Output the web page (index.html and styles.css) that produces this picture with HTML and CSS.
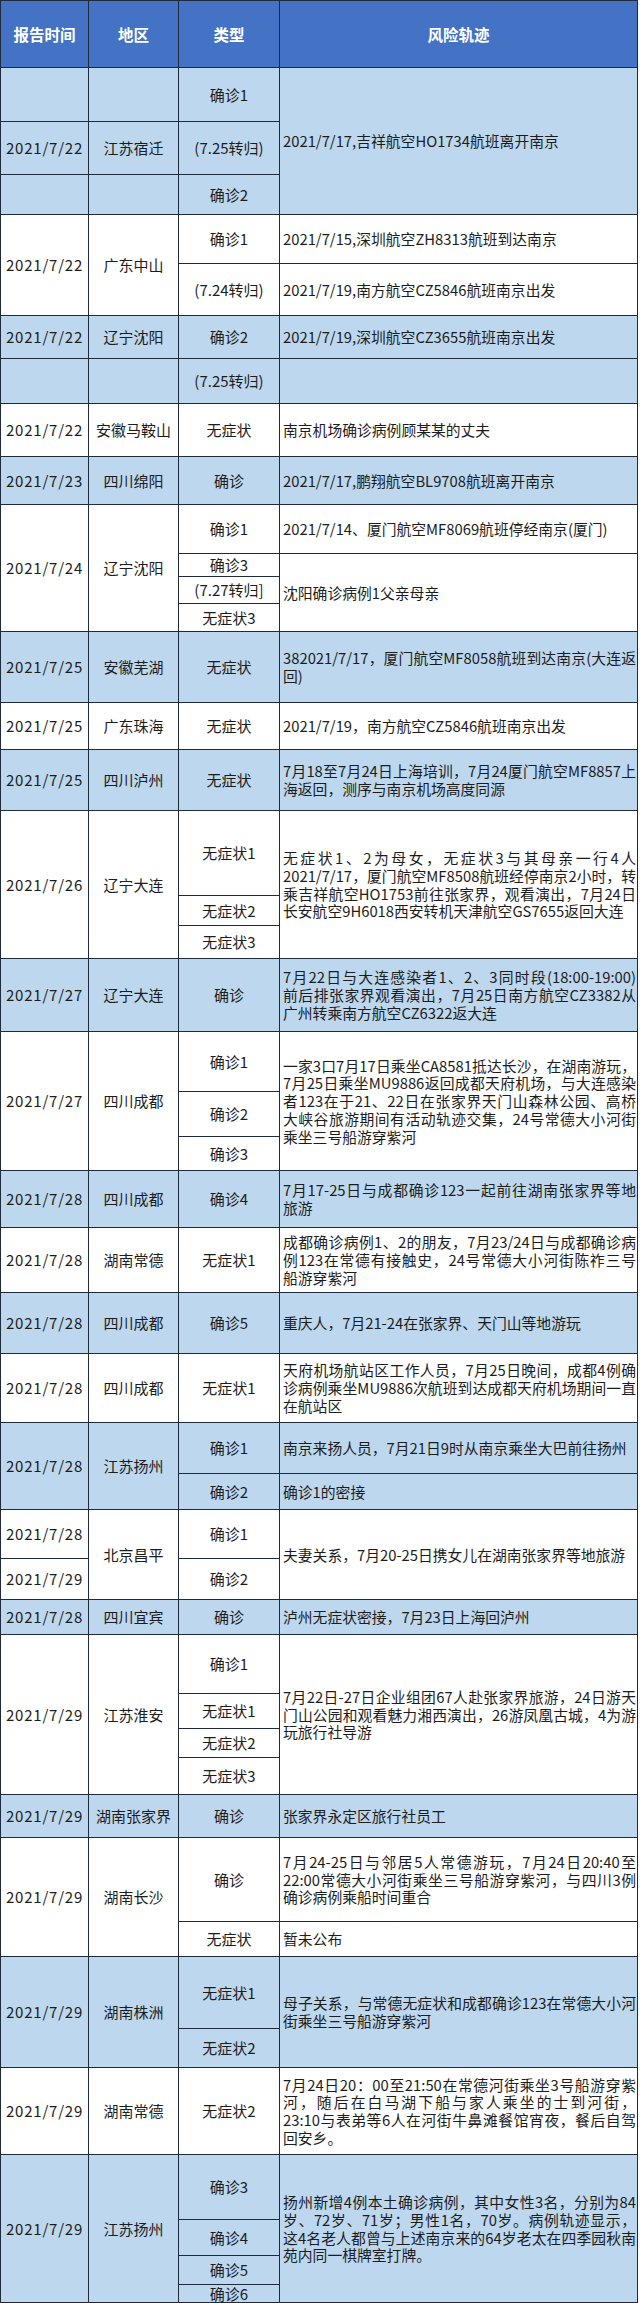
FILE: index.html
```html
<!DOCTYPE html>
<html lang="zh-CN">
<head>
<meta charset="utf-8">
<title>风险轨迹</title>
<link rel="stylesheet" href="styles.css">
</head>
<body>
<div class="sheet">
  <div class="grp head">
    <div class="c">报告时间</div><div class="c">地区</div><div class="c">类型</div><div class="c">风险轨迹</div>
  </div>

  <div class="grp blue r1">
    <div class="c"></div><div class="c"></div><div class="c">确诊1</div>
    <div class="c t s3"><div class="txt"><span class="ln">2021/7/17,吉祥航空HO1734航班离开南京</span></div></div>
    <div class="c date">2021/7/22</div><div class="c">江苏宿迁</div><div class="c">(7.25转归)</div>
    <div class="c"></div><div class="c"></div><div class="c">确诊2</div>
  </div>

  <div class="grp white r2">
    <div class="c date s2">2021/7/22</div><div class="c s2">广东中山</div><div class="c">确诊1</div>
    <div class="c t"><div class="txt"><span class="ln">2021/7/15,深圳航空ZH8313航班到达南京</span></div></div>
    <div class="c">(7.24转归)</div>
    <div class="c t"><div class="txt"><span class="ln">2021/7/19,南方航空CZ5846航班南京出发</span></div></div>
  </div>

  <div class="grp blue r3">
    <div class="c date">2021/7/22</div><div class="c">辽宁沈阳</div><div class="c">确诊2</div>
    <div class="c t"><div class="txt"><span class="ln">2021/7/19,深圳航空CZ3655航班南京出发</span></div></div>
  </div>

  <div class="grp blue r4">
    <div class="c"></div><div class="c"></div><div class="c">(7.25转归)</div><div class="c t"></div>
  </div>

  <div class="grp white r5">
    <div class="c date">2021/7/22</div><div class="c">安徽马鞍山</div><div class="c">无症状</div>
    <div class="c t"><div class="txt"><span class="ln">南京机场确诊病例顾某某的丈夫</span></div></div>
  </div>

  <div class="grp blue r6">
    <div class="c date">2021/7/23</div><div class="c">四川绵阳</div><div class="c">确诊</div>
    <div class="c t"><div class="txt"><span class="ln">2021/7/17,鹏翔航空BL9708航班离开南京</span></div></div>
  </div>

  <div class="grp white r7">
    <div class="c date s4">2021/7/24</div><div class="c s4">辽宁沈阳</div><div class="c">确诊1</div>
    <div class="c t"><div class="txt"><span class="ln">2021/7/14、厦门航空MF8069航班停经南京(厦门)</span></div></div>
    <div class="c">确诊3</div>
    <div class="c t s3"><div class="txt"><span class="ln">沈阳确诊病例1父亲母亲</span></div></div>
    <div class="c">(7.27转归]</div>
    <div class="c">无症状3</div>
  </div>

  <div class="grp blue r8">
    <div class="c date">2021/7/25</div><div class="c">安徽芜湖</div><div class="c">无症状</div>
    <div class="c t"><div class="txt"><span class="ln">382021/7/17，厦门航空MF8058航班到达南京(大连返</span><span class="ln">回)</span></div></div>
  </div>

  <div class="grp white r9">
    <div class="c date">2021/7/25</div><div class="c">广东珠海</div><div class="c">无症状</div>
    <div class="c t"><div class="txt"><span class="ln">2021/7/19，南方航空CZ5846航班南京出发</span></div></div>
  </div>

  <div class="grp blue r10">
    <div class="c date">2021/7/25</div><div class="c">四川泸州</div><div class="c">无症状</div>
    <div class="c t"><div class="txt"><span class="ln">7月18至7月24日上海培训，7月24厦门航空MF8857上</span><span class="ln">海返回，测序与南京机场高度同源</span></div></div>
  </div>

  <div class="grp white r11">
    <div class="c date s3">2021/7/26</div><div class="c s3">辽宁大连</div><div class="c">无症状1</div>
    <div class="c t s3"><div class="txt"><span class="ln">无症状1、2为母女，无症状3与其母亲一行4人</span><span class="ln">2021/7/17，厦门航空MF8508航班经停南京2小时，转</span><span class="ln">乘吉祥航空HO1753前往张家界，观看演出，7月24日</span><span class="ln">长安航空9H6018西安转机天津航空GS7655返回大连</span></div></div>
    <div class="c">无症状2</div>
    <div class="c">无症状3</div>
  </div>

  <div class="grp blue r12">
    <div class="c date">2021/7/27</div><div class="c">辽宁大连</div><div class="c">确诊</div>
    <div class="c t"><div class="txt"><span class="ln">7月22日与大连感染者1、2、3同时段(18:00-19:00)</span><span class="ln">前后排张家界观看演出，7月25日南方航空CZ3382从</span><span class="ln">广州转乘南方航空CZ6322返大连</span></div></div>
  </div>

  <div class="grp white r13">
    <div class="c date s3">2021/7/27</div><div class="c s3">四川成都</div><div class="c">确诊1</div>
    <div class="c t s3"><div class="txt"><span class="ln">一家3口7月17日乘坐CA8581抵达长沙，在湖南游玩，</span><span class="ln">7月25日乘坐MU9886返回成都天府机场，与大连感染</span><span class="ln">者123在于21、22日在张家界天门山森林公园、高桥</span><span class="ln">大峡谷旅游期间有活动轨迹交集，24号常德大小河街</span><span class="ln">乘坐三号船游穿紫河</span></div></div>
    <div class="c">确诊2</div>
    <div class="c">确诊3</div>
  </div>

  <div class="grp blue r14">
    <div class="c date">2021/7/28</div><div class="c">四川成都</div><div class="c">确诊4</div>
    <div class="c t"><div class="txt"><span class="ln">7月17-25日与成都确诊123一起前往湖南张家界等地</span><span class="ln">旅游</span></div></div>
  </div>

  <div class="grp white r15">
    <div class="c date">2021/7/28</div><div class="c">湖南常德</div><div class="c">无症状1</div>
    <div class="c t"><div class="txt"><span class="ln">成都确诊病例1、2的朋友，7月23/24日与成都确诊病</span><span class="ln">例123在常德有接触史，24号常德大小河街陈祚三号</span><span class="ln">船游穿紫河</span></div></div>
  </div>

  <div class="grp blue r16">
    <div class="c date">2021/7/28</div><div class="c">四川成都</div><div class="c">确诊5</div>
    <div class="c t"><div class="txt"><span class="ln">重庆人，7月21-24在张家界、天门山等地游玩</span></div></div>
  </div>

  <div class="grp white r17">
    <div class="c date">2021/7/28</div><div class="c">四川成都</div><div class="c">无症状1</div>
    <div class="c t"><div class="txt"><span class="ln">天府机场航站区工作人员，7月25日晚间，成都4例确</span><span class="ln">诊病例乘坐MU9886次航班到达成都天府机场期间一直</span><span class="ln">在航站区</span></div></div>
  </div>

  <div class="grp blue r18">
    <div class="c date s2">2021/7/28</div><div class="c s2">江苏扬州</div><div class="c">确诊1</div>
    <div class="c t"><div class="txt"><span class="ln">南京来扬人员，7月21日9时从南京乘坐大巴前往扬州</span></div></div>
    <div class="c">确诊2</div>
    <div class="c t"><div class="txt"><span class="ln">确诊1的密接</span></div></div>
  </div>

  <div class="grp white r19">
    <div class="c date">2021/7/28</div><div class="c s2">北京昌平</div><div class="c">确诊1</div>
    <div class="c t s2"><div class="txt"><span class="ln">夫妻关系，7月20-25日携女儿在湖南张家界等地旅游</span></div></div>
    <div class="c date">2021/7/29</div><div class="c">确诊2</div>
  </div>

  <div class="grp blue r20">
    <div class="c date">2021/7/28</div><div class="c">四川宜宾</div><div class="c">确诊</div>
    <div class="c t"><div class="txt"><span class="ln">泸州无症状密接，7月23日上海回泸州</span></div></div>
  </div>

  <div class="grp white r21">
    <div class="c date s4">2021/7/29</div><div class="c s4">江苏淮安</div><div class="c">确诊1</div>
    <div class="c t s4"><div class="txt"><span class="ln">7月22日-27日企业组团67人赴张家界旅游，24日游天</span><span class="ln">门山公园和观看魅力湘西演出，26游凤凰古城，4为游</span><span class="ln">玩旅行社导游</span></div></div>
    <div class="c">无症状1</div>
    <div class="c">无症状2</div>
    <div class="c">无症状3</div>
  </div>

  <div class="grp blue r22">
    <div class="c date">2021/7/29</div><div class="c">湖南张家界</div><div class="c">确诊</div>
    <div class="c t"><div class="txt"><span class="ln">张家界永定区旅行社员工</span></div></div>
  </div>

  <div class="grp white r23">
    <div class="c date s2">2021/7/29</div><div class="c s2">湖南长沙</div><div class="c">确诊</div>
    <div class="c t"><div class="txt"><span class="ln">7月24-25日与邻居5人常德游玩，7月24日20:40至</span><span class="ln">22:00常德大小河街乘坐三号船游穿紫河，与四川3例</span><span class="ln">确诊病例乘船时间重合</span></div></div>
    <div class="c">无症状</div>
    <div class="c t"><div class="txt"><span class="ln">暂未公布</span></div></div>
  </div>

  <div class="grp blue r24">
    <div class="c date s2">2021/7/29</div><div class="c s2">湖南株洲</div><div class="c">无症状1</div>
    <div class="c t s2"><div class="txt"><span class="ln">母子关系，与常德无症状和成都确诊123在常德大小河</span><span class="ln">街乘坐三号船游穿紫河</span></div></div>
    <div class="c">无症状2</div>
  </div>

  <div class="grp white r25">
    <div class="c date">2021/7/29</div><div class="c">湖南常德</div><div class="c">无症状2</div>
    <div class="c t"><div class="txt"><span class="ln">7月24日20：00至21:50在常德河街乘坐3号船游穿紫</span><span class="ln">河，随后在白马湖下船与家人乘坐的士到河街，</span><span class="ln">23:10与表弟等6人在河街牛鼻滩餐馆宵夜，餐后自驾</span><span class="ln">回安乡。</span></div></div>
  </div>

  <div class="grp blue r26">
    <div class="c date s4">2021/7/29</div><div class="c s4">江苏扬州</div><div class="c">确诊3</div>
    <div class="c t s4"><div class="txt"><span class="ln">扬州新增4例本土确诊病例，其中女性3名，分别为84</span><span class="ln">岁、72岁、71岁；男性1名，70岁。病例轨迹显示，</span><span class="ln">这4名老人都曾与上述南京来的64岁老太在四季园秋南</span><span class="ln">苑内同一棋牌室打牌。</span></div></div>
    <div class="c">确诊4</div>
    <div class="c">确诊5</div>
    <div class="c">确诊6</div>
  </div>
</div>
</body>
</html>
```
FILE: styles.css
```css
html, body {
  margin: 0;
  padding: 0;
  background: #ffffff;
}

body {
  font-family: "Noto Sans CJK SC", "Noto Sans", sans-serif;
  font-size: 15px;
  color: #1c1c1c;
}

.sheet {
  width: 638px;
  box-sizing: border-box;
  display: flex;
  flex-direction: column;
  gap: 1px;
  padding: 1px;
  background: #1f2b3d;
}

.grp {
  display: grid;
  grid-template-columns: 87px 89px 100px 357px;
  gap: 1px;
}

.c {
  display: flex;
  align-items: center;
  justify-content: center;
  text-align: center;
  white-space: nowrap;
  min-width: 0;
  min-height: 0;
  line-height: 18px;
}

.blue .c { background: #bdd7ee; }
.white .c { background: #ffffff; }

.head { grid-template-rows: 66px; }
.head .c {
  background: #4472c4;
  color: #ffffff;
  font-weight: 700;
  font-size: 15.5px;
}

.date { letter-spacing: 0.8px; }

.t {
  justify-content: flex-start;
  text-align: left;
  padding: 0 1px 0 3px;
  white-space: normal;
}

.txt {
  width: 100%;
  font-size: 14.8px;
  line-height: 17.7px;
}

.ln {
  display: block;
  text-align: justify;
  text-align-last: justify;
}

.ln:last-child { text-align-last: left; }

.s2 { grid-row: span 2; }
.s3 { grid-row: span 3; }
.s4 { grid-row: span 4; }

.r1 { grid-template-rows: 53px 52px 39px; }
.r2 { grid-template-rows: 48px 51px; }
.r3 { grid-template-rows: 42px; }
.r4 { grid-template-rows: 44px; }
.r5 { grid-template-rows: 52px; }
.r6 { grid-template-rows: 47px; }
.r7 { grid-template-rows: 48px 22px 26px 27px; }
.r8 { grid-template-rows: 70px; }
.r9 { grid-template-rows: 46px; }
.r10 { grid-template-rows: 60px; }
.r11 { grid-template-rows: 84px 29px 32px; }
.r12 { grid-template-rows: 72px; }
.r13 { grid-template-rows: 59px 44px 33px; }
.r14 { grid-template-rows: 56px; }
.r15 { grid-template-rows: 64px; }
.r16 { grid-template-rows: 60px; }
.r17 { grid-template-rows: 68px; }
.r18 { grid-template-rows: 50px 35px; }
.r19 { grid-template-rows: 48px 40px; }
.r20 { grid-template-rows: 34px; }
.r21 { grid-template-rows: 58px 34px 28px 36px; }
.r22 { grid-template-rows: 42px; }
.r23 { grid-template-rows: 83px 34px; }
.r24 { grid-template-rows: 71px 38px; }
.r25 { grid-template-rows: 86px; }
.r26 { grid-template-rows: 64px 35px 28px 17px; }
```
